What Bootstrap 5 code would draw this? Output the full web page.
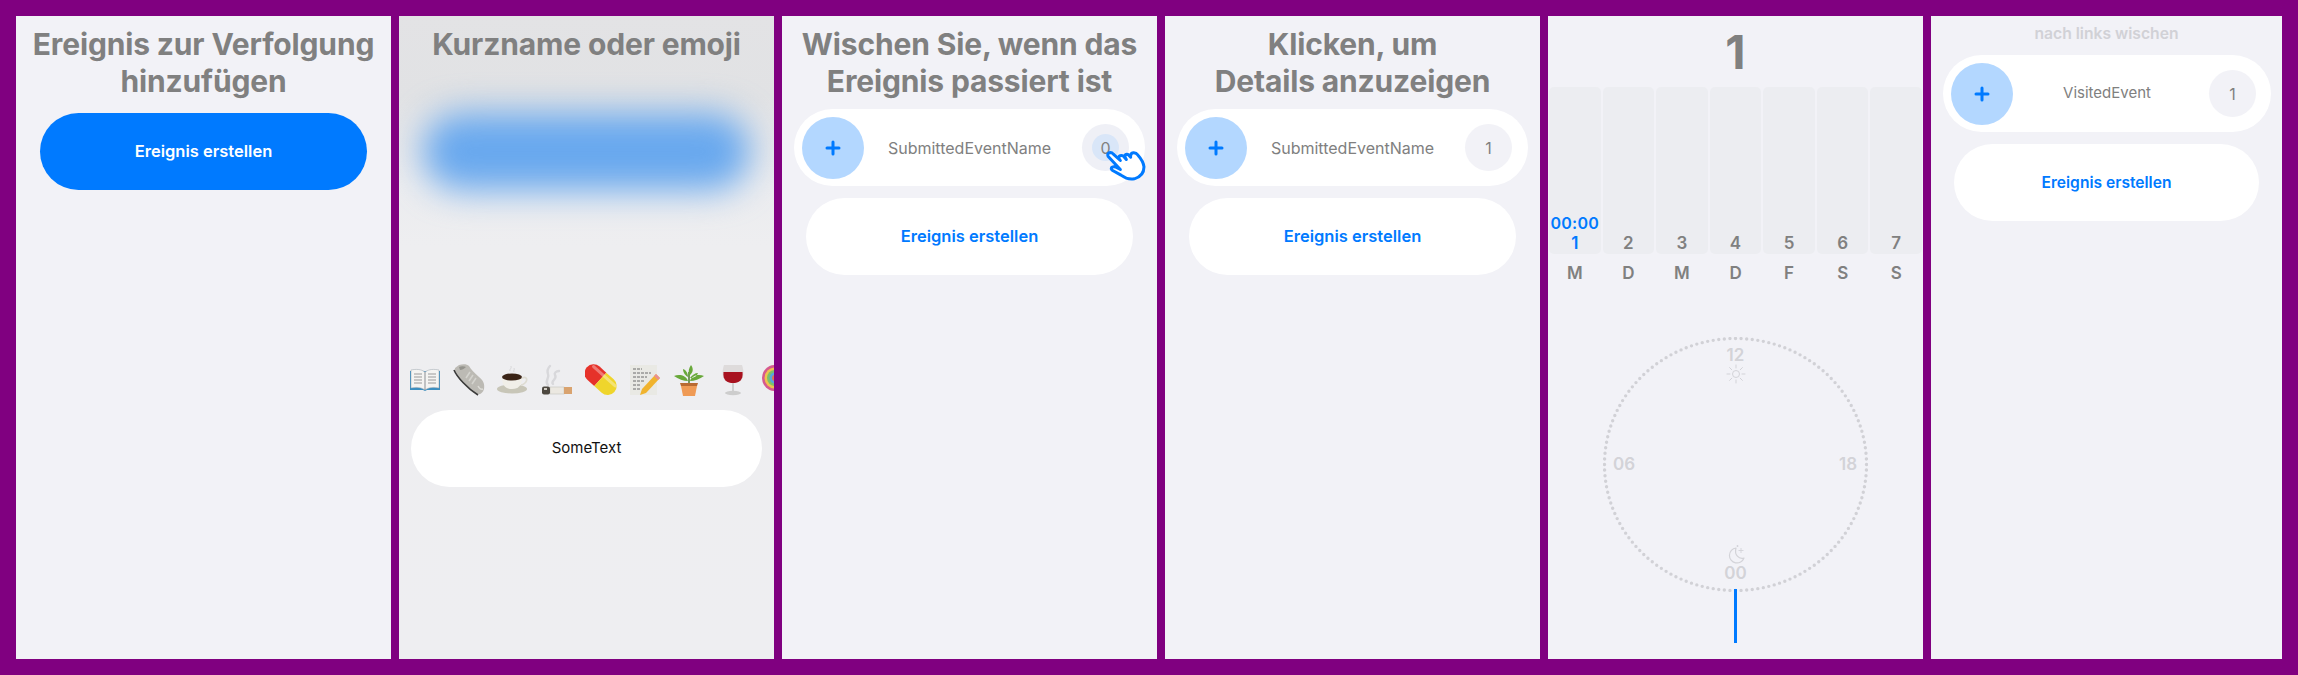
<!DOCTYPE html>
<html lang="de">

<head>
    <meta charset="UTF-8">
    <meta name="viewport" content="width=device-width, initial-scale=1.0">
    <title>Ereignis Screens</title>
    <link href="https://cdn.jsdelivr.net/npm/bootstrap@5.3.2/dist/css/bootstrap.min.css" rel="stylesheet">
    <style>
        html, body { height: 100%; }
        body { background: #800080; font-family: Inter, "Liberation Sans", sans-serif; overflow: hidden; }

        .shot-strip { height: 675px; padding: 16px; gap: 8px; }
        .shot-panel { width: 375px; flex: none; background: #f2f2f7; overflow: hidden; padding-top: 10px; }
        .shot-panel-last { width: 351px; padding-top: 7px; }
        .shot-panel-blur { background: linear-gradient(#e3e3e5 0, #e1e2e4 80px, #ebecef 170px, #eeeef0 230px, #eeeef1 100%); }

        .shot-title { font-size: 30px; line-height: 36.6px; font-weight: 700; color: #808080; margin: 0; letter-spacing: -0.15px; }
        .swipe-hint { font-size: 15.7px; line-height: 22px; font-weight: 600; color: #d1d1d6; margin-bottom: 10px; }

        .pill-btn { height: 77px; border-radius: 38.5px; margin: 0 24px; font-size: 16.5px; font-weight: 600; color: #007aff; background: #fff; }
        .pill-btn-primary { background: #007aff; color: #fff; margin-top: 14px; }
        .pill-btn-blurred { height: 77px; margin: 14px 24px 0; border-radius: 38.5px; background: #68a8ee; filter: blur(17px); }
        .shot-panel-last .pill-btn { margin: 0 23px; font-size: 15.6px; }

        .event-row { display: grid; grid-template-columns: 1fr auto 1fr; align-items: center; height: 77px; margin: 10px 12px 12px; padding: 0 8px; border-radius: 38.5px; background: #fff; position: relative; }
        .shot-panel-last .event-row { margin: 0 11px 12px 12px; }
        .plus-circle { width: 62px; height: 62px; background: #b3d7ff; border-radius: 50%; }
        .event-name { font-size: 16px; color: #808080; }
        .shot-panel-last .event-name { font-size: 15px; }
        .count-circle { width: 47px; height: 47px; margin-right: 8px; justify-self: end; border-radius: 50%; background: #f2f2f7; font-size: 16px; color: #808080; }
        .shot-panel-last .count-circle { margin-right: 7px; }
        .count-touched { background: #eff0f6; }
        .count-touched span { width: 27px; height: 27px; border-radius: 50%; background: #d9e6f8; }
        .hand-icon { position: absolute; right: -1px; bottom: 3px; width: 40px; height: 33px; }

        .emoji-strip { margin: 174px 0 16px 10px; gap: 12px; width: 400px; height: 30px; }
        .emoji-item { width: 32px; height: 32px; flex: none; }
        .text-pill { height: 77px; margin: 0 12px; border-radius: 38.5px; background: #fff; font-size: 15px; color: #111; }

        .big-count { height: 61px; font-size: 47px; line-height: 51px; font-weight: 700; color: #808080; }
        .week-bars { gap: 2px; padding: 0 1px; }
        .week-bar { flex: 1 1 0; height: 167px; background: #ecedf1; border-radius: 5px; font-size: 17px; line-height: 22px; font-weight: 600; color: #808080; }
        .week-bar-today { color: #007aff; }
        .week-time { margin-bottom: -2px; font-size: 16px; letter-spacing: .3px; white-space: nowrap; }
        .week-days { gap: 2px; padding: 0 1px; margin-top: 8px; font-size: 17px; line-height: 22px; font-weight: 600; color: #808080; }
        .week-days span { flex: 1 1 0; }

        .clock-face { position: relative; width: 265px; height: 255px; margin: 53px auto 0; }
        .clock-ring { position: absolute; inset: 0; width: 100%; height: 100%; }
        .clock-label { position: absolute; font-size: 17px; line-height: 20px; font-weight: 600; color: #d3d3d8; transform: translate(-50%, -50%); }
        .clock-icon { position: absolute; width: 20px; height: 20px; left: 50%; transform: translate(-50%, -50%); }
        .clock-hand { position: absolute; left: 50%; top: 252px; width: 3px; height: 54px; margin-left: -1.5px; background: #007aff; }
    </style>
</head>

<body>
    <div class="shot-strip d-flex">

        <!-- Screen 1 -->
        <section class="shot-panel">
            <h2 class="shot-title text-center">Ereignis zur Verfolgung<br>hinzufügen</h2>
            <div class="pill-btn pill-btn-primary d-flex align-items-center justify-content-center">Ereignis erstellen</div>
        </section>

        <!-- Screen 2 -->
        <section class="shot-panel shot-panel-blur">
            <h2 class="shot-title text-center">Kurzname oder emoji<br>&nbsp;</h2>
            <div class="pill-btn-blurred"></div>
            <div class="emoji-strip d-flex">
                <!-- book -->
                <svg class="emoji-item" viewBox="0 0 32 32">
                    <path d="M1 7h30v19H18l-2 1-2-1H1z" fill="#3c8fc0"/>
                    <path d="M2 6c5-1 10-1 14 2 4-3 9-3 14-2v18c-5-1-10-1-14 2-4-3-9-3-14-2z" fill="#f4f4f2" stroke="#9aa5ad" stroke-width=".5"/>
                    <path d="M5 10h8M5 13h8M5 16h8M5 19h8M19 10h8M19 13h8M19 16h8M19 19h8" stroke="#9a9a9a" stroke-width="1"/>
                    <path d="M16 8v18" stroke="#8a8f94" stroke-width="1"/>
                </svg>
                <!-- shoe -->
                <svg class="emoji-item" viewBox="0 0 32 32">
                    <path d="M6 1C10 0 14 0 16 2 18 6 22 9 26 13 30 16 32 20 31 25 30 29 27 31 24 30 19 29 13 23 8 17 4 13 1 8 2 4Z" fill="#bcbab4"/>
                    <path d="M1 6C4 13 14 24 25 31" fill="none" stroke="#3a3a3a" stroke-width="1.600"/>
                    <path d="M6 3C8 2 11 2 13 3 11 5 9 6 7 6Z" fill="#94938d"/>
                    <path d="M17 8l-4 6M20 11l-4 6M23 14l-4 6" stroke="#d4d3ce" stroke-width="1.600"/>
                    <path d="M25 22c1 2 2 4 5 3" fill="none" stroke="#dcdbd6" stroke-width="1.500"/>
                </svg>
                <!-- coffee -->
                <svg class="emoji-item" viewBox="0 0 32 32">
                    <ellipse cx="15" cy="25" rx="15" ry="4.500" fill="#c8c6b8"/>
                    <path d="M5 13c0 8 3 12 10 12s10-4 10-12z" fill="#f1efe8"/>
                    <ellipse cx="15" cy="13" rx="10" ry="3.600" fill="#3a2417"/>
                    <path d="M25 14c5-2 6 2 3 5-1 1-3 2-4 2" fill="none" stroke="#dedcd2" stroke-width="1.600"/>
                    <path d="M13 7c-1-2 2-2 1-5M17 8c-1-2 1-2 0-4" fill="none" stroke="#d8d8da" stroke-width="1"/>
                </svg>
                <!-- cigarette -->
                <svg class="emoji-item" viewBox="0 0 32 32">
                    <path d="M7 21c-4-4 2-7 0-11-1-3 0-6 2-8M12 20c-3-3 5-5 2-9-1-2 1-4 4-4" fill="none" stroke="#d8d8db" stroke-width="2.400" stroke-linecap="round"/>
                    <rect x="9" y="23" width="14" height="7" fill="#ebe8e1" stroke="#c4c2bc" stroke-width=".6"/>
                    <rect x="1" y="22.500" width="8" height="8" rx="2" fill="#4d4840"/>
                    <rect x="3" y="24" width="3" height="2" fill="#cfcbc2"/>
                    <rect x="23" y="23" width="8" height="7" fill="#d9a36f"/>
                </svg>
                <!-- pill -->
                <svg class="emoji-item" viewBox="0 0 32 32">
                    <g transform="rotate(42 16 16)">
                        <path d="M16 7H7a9 9 0 0 0 0 18h9z" fill="#e6322a" transform="translate(-1 0)"/>
                        <path d="M15 7h10a9 9 0 0 1 0 18H15z" fill="#efd52c"/>
                        <rect x="0" y="9.500" width="32" height="3" rx="1.500" fill="#fff" opacity=".35"/>
                    </g>
                </svg>
                <!-- memo -->
                <svg class="emoji-item" viewBox="0 0 32 32">
                    <rect x="1" y="1" width="27" height="30" fill="#e9e9e4"/>
                    <path d="M4 5h9M4 9h18M4 13h14M4 17h11M4 21h7M4 25h7" stroke="#6d6d6d" stroke-width="1" stroke-dasharray="3 1"/>
                    <path d="M27 10l4 4-14 15-6 2 2-6z" fill="#f0b32e"/>
                    <path d="M27 10l4 4-2 2-4-4z" fill="#e98f93"/>
                </svg>
                <!-- plant -->
                <svg class="emoji-item" viewBox="0 0 32 32">
                    <path d="M16 20V8" stroke="#4a7a2a" stroke-width="1.500"/>
                    <path d="M16 12c-1-5 0-8 2-11 3 4 2 8-2 11zM15 17C11 17 5 15 1 12c5-2 12-1 14 5zM17 17c4 0 10-2 14-5-5-2-12-1-14 5zM15 13c-2-1-5-4-5-8 3 1 5 4 5 8zM17 14c2-3 5-5 8-5-1 3-4 5-8 5z" fill="#68a83a"/>
                    <path d="M7 19h18l-1 3h-16z" fill="#b96a32"/>
                    <path d="M8 22h16l-2 10H10z" fill="#ef9a55"/>
                </svg>
                <!-- wine -->
                <svg class="emoji-item" viewBox="0 0 32 32">
                    <path d="M7 1h18c2 6 2 12-1 15-2 2-5 3-8 3s-6-1-8-3C5 13 5 7 7 1z" fill="#dedbdb"/>
                    <path d="M6.500 8h19c.5 4-.5 7-2 8.500-2 2-5 2.500-7.500 2.500s-5.500-.5-7.500-2.500c-1.500-1.500-2.500-4.500-2-8.500z" fill="#a8121f"/>
                    <rect x="15" y="19" width="2" height="9" fill="#cfcfcf"/>
                    <ellipse cx="16" cy="29" rx="8" ry="2.200" fill="#cdcdcd"/>
                </svg>
                <!-- lollipop -->
                <svg class="emoji-item" viewBox="0 0 32 32">
                    <circle cx="14" cy="14" r="13" fill="#d65a8e"/>
                    <circle cx="14" cy="14" r="10.500" fill="#efc24e"/>
                    <circle cx="14" cy="14" r="8" fill="#7cc16a"/>
                    <circle cx="14" cy="14" r="5.500" fill="#56a6dd"/>
                    <circle cx="14" cy="14" r="3" fill="#e56f4c"/>
                </svg>
            </div>
            <div class="text-pill d-flex align-items-center justify-content-center">SomeText</div>
        </section>

        <!-- Screen 3 -->
        <section class="shot-panel">
            <h2 class="shot-title text-center">Wischen Sie, wenn das<br>Ereignis passiert ist</h2>
            <div class="event-row">
                <div class="plus-circle d-flex align-items-center justify-content-center">
                    <svg width="16" height="16" viewBox="0 0 16 16"><path d="M8 2v12M2 8h12" stroke="#007aff" stroke-width="3" stroke-linecap="round"/></svg>
                </div>
                <div class="event-name text-center">SubmittedEventName</div>
                <div class="count-circle count-touched d-flex align-items-center justify-content-center">
                    <span class="d-flex align-items-center justify-content-center">0</span>
                </div>
                <svg class="hand-icon" viewBox="200 122 120 98">
                    <path d="M206 140Q203 130 213 129Q218 129 222 134L243 153L238 146Q238 138 247 138Q251 138 255 143L261 150L256 141Q258 133 266 135L274 143Q272 132 282 130Q290 129 296 137Q312 155 314 172Q314 200 285 208Q265 212 245 197L220 183Q213 178 218 173Q223 170 230 173L243 180Z" fill="#fff" stroke="#007aff" stroke-width="9" stroke-linejoin="round"/>
                </svg>
            </div>
            <div class="pill-btn d-flex align-items-center justify-content-center">Ereignis erstellen</div>
        </section>

        <!-- Screen 4 -->
        <section class="shot-panel">
            <h2 class="shot-title text-center">Klicken, um<br>Details anzuzeigen</h2>
            <div class="event-row">
                <div class="plus-circle d-flex align-items-center justify-content-center">
                    <svg width="16" height="16" viewBox="0 0 16 16"><path d="M8 2v12M2 8h12" stroke="#007aff" stroke-width="3" stroke-linecap="round"/></svg>
                </div>
                <div class="event-name text-center">SubmittedEventName</div>
                <div class="count-circle d-flex align-items-center justify-content-center">1</div>
            </div>
            <div class="pill-btn d-flex align-items-center justify-content-center">Ereignis erstellen</div>
        </section>

        <!-- Screen 5 -->
        <section class="shot-panel">
            <div class="big-count text-center">1</div>
            <div class="week-bars d-flex">
                <div class="week-bar week-bar-today d-flex flex-column align-items-center justify-content-end">
                    <div class="week-time">00:00</div>
                    <div>1</div>
                </div>
                <div class="week-bar d-flex align-items-end justify-content-center">2</div>
                <div class="week-bar d-flex align-items-end justify-content-center">3</div>
                <div class="week-bar d-flex align-items-end justify-content-center">4</div>
                <div class="week-bar d-flex align-items-end justify-content-center">5</div>
                <div class="week-bar d-flex align-items-end justify-content-center">6</div>
                <div class="week-bar d-flex align-items-end justify-content-center">7</div>
            </div>
            <div class="week-days d-flex text-center">
                <span>M</span><span>D</span><span>M</span><span>D</span><span>F</span><span>S</span><span>S</span>
            </div>
            <div class="clock-face">
                <svg class="clock-ring" viewBox="0 0 265 255">
                    <ellipse cx="132.500" cy="127.500" rx="131" ry="126" fill="none" stroke="#d1d1d6" stroke-width="3.400" stroke-linecap="round" stroke-dasharray="0 1" pathLength="144"/>
                </svg>
                <span class="clock-label" style="left:50%;top:18px">12</span>
                <svg class="clock-icon" style="top:37px" viewBox="0 0 20 20">
                    <circle cx="10" cy="10" r="3.500" fill="none" stroke="#d3d3d8"/>
                    <path d="M10 1v3M10 16v3M1 10h3M16 10h3M3.600 3.600l2.200 2.200M14.200 14.200l2.200 2.200M3.600 16.400l2.200-2.200M14.200 5.800l2.200-2.200" stroke="#d3d3d8" stroke-linecap="round"/>
                </svg>
                <span class="clock-label" style="left:21px;top:127px">06</span>
                <span class="clock-label" style="left:245px;top:127px">18</span>
                <svg class="clock-icon" style="top:217px" viewBox="0 0 20 20">
                    <path d="M10 4a7.500 7.500 0 1 0 8 10c-5 1.500-10-3-8-10z" fill="none" stroke="#d3d3d8" stroke-width="1.200" stroke-linejoin="round"/>
                    <path d="M15 4v5M12.500 6.500h5M11.500 1v2M10.500 2h2" stroke="#d3d3d8" stroke-width=".9"/>
                </svg>
                <span class="clock-label" style="left:50%;top:236px">00</span>
                <div class="clock-hand"></div>
            </div>
        </section>

        <!-- Screen 6 -->
        <section class="shot-panel shot-panel-last">
            <div class="swipe-hint text-center">nach links wischen</div>
            <div class="event-row">
                <div class="plus-circle d-flex align-items-center justify-content-center">
                    <svg width="16" height="16" viewBox="0 0 16 16"><path d="M8 2v12M2 8h12" stroke="#007aff" stroke-width="3" stroke-linecap="round"/></svg>
                </div>
                <div class="event-name text-center">VisitedEvent</div>
                <div class="count-circle d-flex align-items-center justify-content-center">1</div>
            </div>
            <div class="pill-btn d-flex align-items-center justify-content-center">Ereignis erstellen</div>
        </section>
    </div>

    <script src="https://cdn.jsdelivr.net/npm/bootstrap@5.3.2/dist/js/bootstrap.bundle.min.js"></script>
</body>

</html>
